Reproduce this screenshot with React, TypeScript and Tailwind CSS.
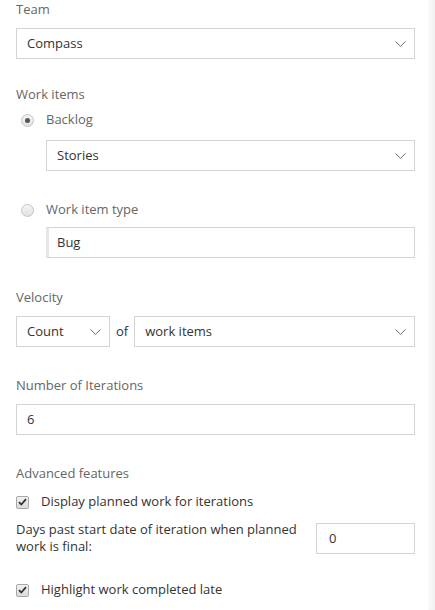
import React from "react";

const Chevron = () => (
  <svg width="11" height="6" viewBox="0 0 11 6" fill="none" className="shrink-0">
    <path d="M0.5 0.5 L5.5 5.3 L10.5 0.5" stroke="#6b6b6b" strokeWidth="1" />
  </svg>
);

const Select = ({ value, className = "" }: { value: string; className?: string }) => (
  <div
    className={`flex h-[31px] items-center justify-between border border-[#d4d4d4] bg-white pl-[10px] pr-[8px] text-[13px] text-[#333] ${className}`}
  >
    <span className="pt-[1px]">{value}</span>
    <Chevron />
  </div>
);

const Label = ({ children, className = "" }: { children: React.ReactNode; className?: string }) => (
  <div className={`h-[18px] leading-[18px] text-[13px] text-[#666] ${className}`}>{children}</div>
);

const Radio = ({ checked }: { checked?: boolean }) => (
  <div className="flex h-[13px] w-[13px] items-center justify-center rounded-full border border-[#c4c4c4] bg-gradient-to-b from-[#f4f4f4] to-[#e2e2e2]">
    {checked && <div className="h-[5px] w-[5px] rounded-full bg-[#555]" />}
  </div>
);

const Check = () => (
  <div className="flex h-[13px] w-[13px] items-center justify-center rounded-[2px] border border-[#a8a8a8] bg-gradient-to-b from-[#f0f0f0] to-[#dcdcdc]">
    <svg width="9" height="8" viewBox="0 0 9 8">
      <path d="M1 4.2 L3.3 6.5 L8 1.2" stroke="#333" strokeWidth="1.8" fill="none" />
    </svg>
  </div>
);

export default function App() {
  return (
    <div
      className="flex h-[610px] w-[435px] bg-white"
      style={{ fontFamily: '"Open Sans", "Noto Sans", sans-serif' }}
    >
      <div className="flex-1 pl-[16px] pr-[13px]">
        <Label className="mt-0">Team</Label>
        <Select value="Compass" className="mt-[10px]" />

        <Label className="mt-[26px]">Work items</Label>
        <div className="mt-[8px] flex h-[18px] items-center">
          <div className="ml-[5px] w-[25px]">
            <Radio checked />
          </div>
          <span className="text-[13px] text-[#666]">Backlog</span>
        </div>
        <Select value="Stories" className="ml-[30px] mt-[11px]" />

        <div className="mt-[30px] flex h-[18px] items-center">
          <div className="ml-[5px] w-[25px]">
            <Radio />
          </div>
          <span className="text-[13px] text-[#666]">Work item type</span>
        </div>
        <div className="ml-[30px] mt-[8px] flex h-[31px] items-center border border-[#d4d4d4] border-l-[3px] border-l-[#e6e6e6] bg-white pl-[8px] pt-[1px] text-[13px] text-[#333]">
          Bug
        </div>

        <Label className="mt-[30px]">Velocity</Label>
        <div className="mt-[10px] flex items-center">
          <Select value="Count" className="w-[94px]" />
          <span className="mx-[6px] pt-[1px] text-[13px] text-[#333]">of</span>
          <Select value="work items" className="flex-1" />
        </div>

        <Label className="mt-[29px]">Number of Iterations</Label>
        <div className="mt-[10px] flex h-[31px] items-center border border-[#d4d4d4] bg-white pl-[10px] pt-[1px] text-[13px] text-[#333]">
          6
        </div>

        <Label className="mt-[29px]">Advanced features</Label>
        <div className="mt-[11px] flex h-[18px] items-center">
          <div className="w-[25px]">
            <Check />
          </div>
          <span className="text-[13px] text-[#333]">Display planned work for iterations</span>
        </div>
        <div className="mt-[10px] flex items-center justify-between">
          <div className="w-[292px] text-[13px] leading-[17px] text-[#333]">
            Days past start date of iteration when planned work is final:
          </div>
          <div className="flex h-[31px] w-[99px] items-center border border-[#d4d4d4] bg-white pl-[12px] pt-[1px] text-[13px] text-[#333]">
            0
          </div>
        </div>
        <div className="mt-[26px] flex h-[18px] items-center">
          <div className="w-[25px]">
            <Check />
          </div>
          <span className="text-[13px] text-[#333]">Highlight work completed late</span>
        </div>
      </div>
      <div className="w-[7px] bg-gradient-to-r from-[#fafafa] to-[#f0f0f0]" />
    </div>
  );
}
